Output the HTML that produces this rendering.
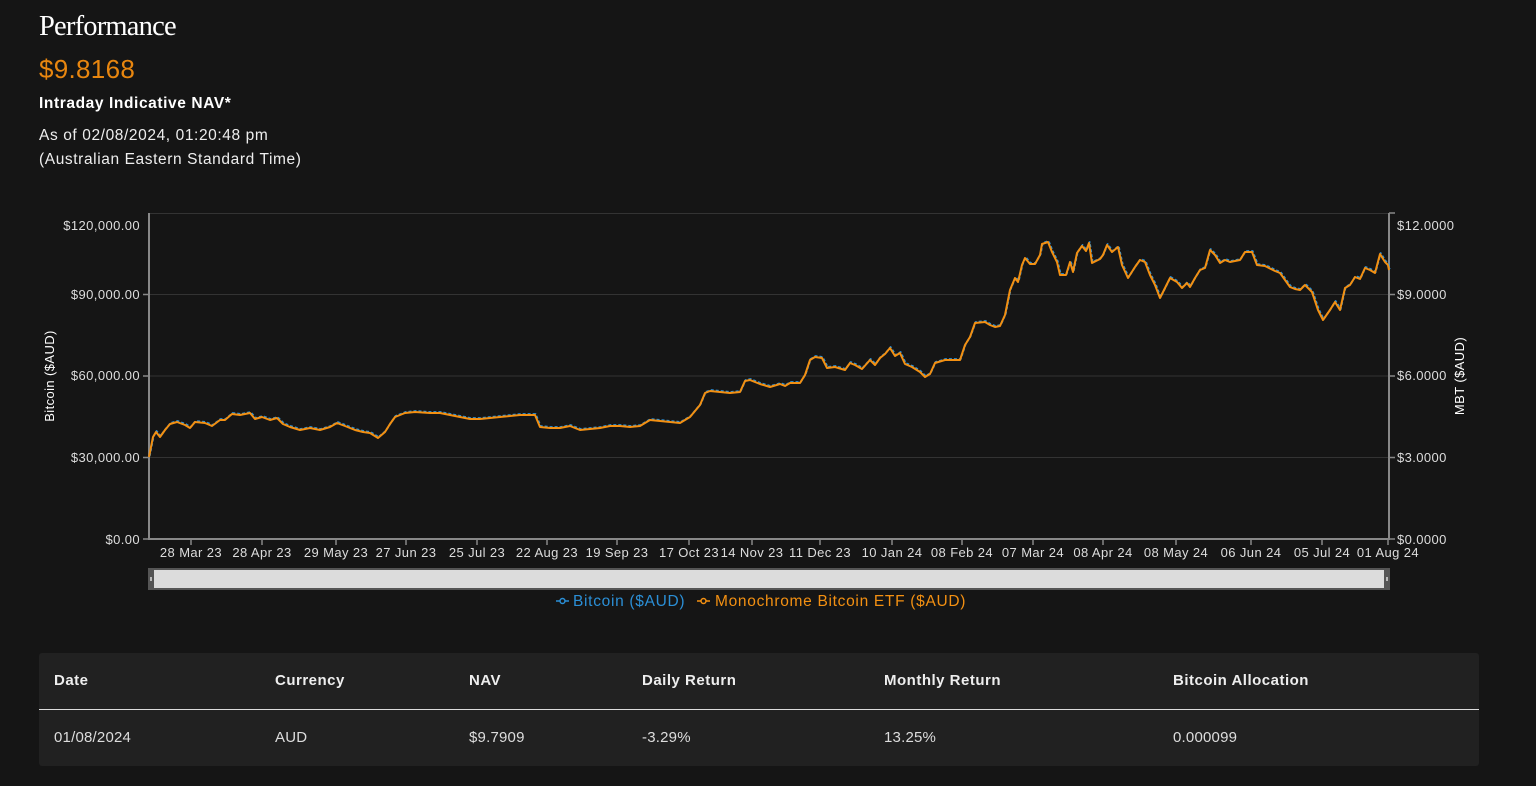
<!DOCTYPE html>
<html><head><meta charset="utf-8"><style>
body{margin:0;background:#151515;width:1536px;height:786px;overflow:hidden;font-family:"Liberation Sans",sans-serif;color:#fff;position:relative}
.a{position:absolute;white-space:nowrap}
h1{position:absolute;left:39px;top:11px;margin:0;font-family:"Liberation Serif",serif;font-weight:normal;font-size:28.5px;letter-spacing:-0.8px}
.tbl{position:absolute;left:39px;top:653px;width:1440px;height:113px;background:#212121;border-radius:3px}
.tbl .h{position:absolute;top:19px;font-size:15px;font-weight:bold;color:#eee;letter-spacing:0.5px}
.tbl .d{position:absolute;top:76px;font-size:15px;color:#ddd;letter-spacing:0.2px}
.t{font-size:15.5px;letter-spacing:0.6px}
</style></head><body>
<h1>Performance</h1>
<div class="a" style="left:39px;top:54px;font-size:26px;letter-spacing:0.3px;color:#e8860f">$9.8168</div>
<div class="a t" style="left:39px;top:95px;font-weight:bold">Intraday Indicative NAV*</div>
<div class="a t" style="left:39px;top:127px;color:#eee">As of 02/08/2024, 01:20:48 pm</div>
<div class="a t" style="left:39px;top:151px;color:#eee">(Australian Eastern Standard Time)</div>
<svg class="a" style="left:0;top:0" width="1536" height="640" font-family="Liberation Sans, sans-serif" font-size="13" letter-spacing="0.4">
<g stroke="#333" stroke-width="1">
<line x1="149" y1="213.5" x2="1389" y2="213.5"/><line x1="149" y1="294.5" x2="1389" y2="294.5"/><line x1="149" y1="376" x2="1389" y2="376"/><line x1="149" y1="457.5" x2="1389" y2="457.5"/>
</g>
<g stroke="#888" stroke-width="2" fill="none">
<line x1="149" y1="213" x2="149" y2="540"/><line x1="1389" y1="213" x2="1389" y2="540"/><line x1="148" y1="539" x2="1390" y2="539"/>
</g>
<g stroke="#888" stroke-width="1.5">
<line x1="143" y1="294.5" x2="149" y2="294.5"/><line x1="143" y1="376" x2="149" y2="376"/><line x1="143" y1="457.5" x2="149" y2="457.5"/><line x1="143" y1="539" x2="149" y2="539"/>
<line x1="1389" y1="213" x2="1395" y2="213"/><line x1="1389" y1="294.5" x2="1395" y2="294.5"/><line x1="1389" y1="376" x2="1395" y2="376"/><line x1="1389" y1="457.5" x2="1395" y2="457.5"/><line x1="1389" y1="539" x2="1395" y2="539"/>
<line x1="191" y1="539" x2="191" y2="545"/><line x1="262" y1="539" x2="262" y2="545"/><line x1="336" y1="539" x2="336" y2="545"/><line x1="406" y1="539" x2="406" y2="545"/><line x1="477" y1="539" x2="477" y2="545"/><line x1="547" y1="539" x2="547" y2="545"/><line x1="617" y1="539" x2="617" y2="545"/><line x1="689" y1="539" x2="689" y2="545"/><line x1="752" y1="539" x2="752" y2="545"/><line x1="820" y1="539" x2="820" y2="545"/><line x1="892" y1="539" x2="892" y2="545"/><line x1="962" y1="539" x2="962" y2="545"/><line x1="1033" y1="539" x2="1033" y2="545"/><line x1="1103" y1="539" x2="1103" y2="545"/><line x1="1176" y1="539" x2="1176" y2="545"/><line x1="1251" y1="539" x2="1251" y2="545"/><line x1="1322" y1="539" x2="1322" y2="545"/><line x1="1388" y1="539" x2="1388" y2="545"/>
</g>
<g fill="#ddd" text-anchor="end">
<text x="140" y="230">$120,000.00</text><text x="140" y="299">$90,000.00</text><text x="140" y="380">$60,000.00</text><text x="140" y="462">$30,000.00</text><text x="140" y="544">$0.00</text>
</g>
<g fill="#ddd">
<text x="1397" y="230">$12.0000</text><text x="1397" y="299">$9.0000</text><text x="1397" y="380">$6.0000</text><text x="1397" y="462">$3.0000</text><text x="1397" y="544">$0.0000</text>
</g>
<text transform="translate(54,376) rotate(-90)" text-anchor="middle" fill="#fff">Bitcoin ($AUD)</text>
<text transform="translate(1464,376) rotate(-90)" text-anchor="middle" fill="#fff">MBT ($AUD)</text>
<g fill="#ddd" text-anchor="middle">
<text x="191" y="557">28 Mar 23</text><text x="262" y="557">28 Apr 23</text><text x="336" y="557">29 May 23</text><text x="406" y="557">27 Jun 23</text><text x="477" y="557">25 Jul 23</text><text x="547" y="557">22 Aug 23</text><text x="617" y="557">19 Sep 23</text><text x="689" y="557">17 Oct 23</text><text x="752" y="557">14 Nov 23</text><text x="820" y="557">11 Dec 23</text><text x="892" y="557">10 Jan 24</text><text x="962" y="557">08 Feb 24</text><text x="1033" y="557">07 Mar 24</text><text x="1103" y="557">08 Apr 24</text><text x="1176" y="557">08 May 24</text><text x="1251" y="557">06 Jun 24</text><text x="1322" y="557">05 Jul 24</text><text x="1388" y="557">01 Aug 24</text>
</g>
<defs><polyline id="L" fill="none" stroke-linejoin="round" points="149,457 153,437 156,432 160,437 165,430 170,424 177,422 185,425 190,428 195,422 205,423 212,426 220,420 225,420 232,414 240,415 250,413 255,419 262,417 270,420 277,418 283,424 290,427 300,430 310,428 320,430 330,427 337,423 345,426 355,430 363,432 370,433 378,438 385,432 390,424 395,417 405,413 415,412 430,413 440,413 450,415 460,417 470,419 480,419 490,418 500,417 510,416 520,415 535,415 540,427 550,428 560,428 570,426 580,430 590,429 600,428 610,426 620,426 630,427 640,426 650,420 660,421 670,422 680,423 690,417 700,405 705,393 710,391 720,392 730,393 740,392 745,381 750,380 760,384 770,387 780,384 785,386 790,383 800,383 805,375 810,360 815,357 822,358 827,368 835,367 845,370 850,363 855,365 862,369 870,360 875,365 880,358 885,354 890,348 895,356 900,353 905,364 912,367 920,372 925,377 930,374 935,363 945,360 955,360 960,360 965,345 970,337 975,323 985,322 990,325 995,327 1000,326 1005,315 1010,290 1015,278 1018,282 1022,265 1025,258 1030,264 1035,264 1040,255 1042,244 1048,242 1052,252 1057,262 1060,275 1066,275 1070,262 1073,272 1077,253 1082,246 1086,251 1089,243 1092,263 1100,259 1103,255 1107,245 1112,252 1118,247 1122,265 1128,278 1135,267 1140,260 1145,262 1150,275 1155,285 1160,298 1165,288 1170,278 1177,282 1182,288 1187,283 1190,287 1195,278 1200,270 1205,268 1210,250 1215,255 1220,263 1225,260 1230,262 1240,260 1245,252 1252,252 1257,265 1265,266 1275,271 1280,273 1285,280 1290,287 1295,289 1300,290 1305,285 1312,292 1318,310 1323,320 1330,310 1335,302 1340,310 1345,288 1350,285 1355,277 1360,279 1365,268 1370,270 1375,273 1380,254 1385,262 1388,265 1389,270"/></defs>
<use href="#L" stroke="#2b8fd6" stroke-width="2" stroke-dasharray="3 2" transform="translate(0.6,-0.9)"/>
<use href="#L" stroke="#f39012" stroke-width="2"/>
<rect x="149" y="569" width="1240" height="20" fill="#dcdcdc" stroke="#555" stroke-width="2"/>
<rect x="148" y="569" width="6" height="20" fill="#555"/><rect x="1384" y="569" width="6" height="20" fill="#555"/>
<rect x="150" y="577" width="2" height="4" fill="#bbb"/><rect x="1386" y="577" width="2" height="4" fill="#bbb"/>
<g font-size="15.5" letter-spacing="0.7">
<line x1="556" y1="601" x2="569" y2="601" stroke="#2b8fd6" stroke-width="1.5"/><circle cx="562.5" cy="601" r="2.5" fill="#151515" stroke="#2b8fd6" stroke-width="1.5"/>
<text x="573" y="606" fill="#2b8fd6">Bitcoin ($AUD)</text>
<line x1="697" y1="601" x2="710" y2="601" stroke="#f39012" stroke-width="1.5"/><circle cx="703.5" cy="601" r="2.5" fill="#151515" stroke="#f39012" stroke-width="1.5"/>
<text x="715" y="606" fill="#f39012">Monochrome Bitcoin ETF ($AUD)</text>
</g>
</svg>
<div class="tbl">
<div class="h" style="left:15px">Date</div><div class="h" style="left:236px">Currency</div><div class="h" style="left:430px">NAV</div><div class="h" style="left:603px">Daily Return</div><div class="h" style="left:845px">Monthly Return</div><div class="h" style="left:1134px">Bitcoin Allocation</div>
<div style="position:absolute;left:0;right:0;top:56px;height:1px;background:#ddd"></div>
<div class="d" style="left:15px">01/08/2024</div><div class="d" style="left:236px">AUD</div><div class="d" style="left:430px">$9.7909</div><div class="d" style="left:603px">-3.29%</div><div class="d" style="left:845px">13.25%</div><div class="d" style="left:1134px">0.000099</div>
</div>
</body></html>
